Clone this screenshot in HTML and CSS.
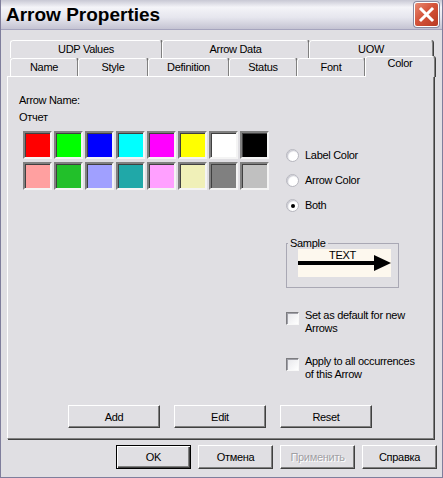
FILE: index.html
```html
<!DOCTYPE html>
<html lang="ru">
<head>
    <meta charset="UTF-8">
    <title>Arrow Properties</title>
    <link rel="stylesheet" href="styles.css">
</head>
<body>
    <div class="window">
        <div class="titlebar">
            <span class="title">Arrow Properties</span>
            <div class="close">
                <svg width="23" height="23" viewBox="0 0 23 23">
                    <path d="M6 6 L17 17 M17 6 L6 17" stroke="#fff" stroke-width="3" stroke-linecap="square"/>
                </svg>
            </div>
        </div>

        <div class="body">
            <div class="tabs">
                <div class="tab-row">
                    <div class="tab w152">UDP Values</div>
                    <div class="tab w147">Arrow Data</div>
                    <div class="tab w124">UOW</div>
                </div>
                <div class="tab-row">
                    <div class="tab w68">Name</div>
                    <div class="tab w70">Style</div>
                    <div class="tab w81">Definition</div>
                    <div class="tab w68">Status</div>
                    <div class="tab w68">Font</div>
                    <div class="tab w70 active">Color</div>
                </div>
            </div>

            <div class="panel">
                <div class="panel-main">
                    <div class="left">
                        <div class="label">Arrow Name:</div>
                        <div class="label name">Отчет</div>
                        <div class="swatches">
                            <div class="swatch" style="background:#ff0000"></div>
                            <div class="swatch" style="background:#00ff00"></div>
                            <div class="swatch" style="background:#0000ff"></div>
                            <div class="swatch" style="background:#00ffff"></div>
                            <div class="swatch" style="background:#ff00ff"></div>
                            <div class="swatch" style="background:#ffff00"></div>
                            <div class="swatch" style="background:#ffffff"></div>
                            <div class="swatch" style="background:#000000"></div>
                            <div class="swatch" style="background:#ffa0a0"></div>
                            <div class="swatch" style="background:#22c02a"></div>
                            <div class="swatch" style="background:#a0a0ff"></div>
                            <div class="swatch" style="background:#20a8a8"></div>
                            <div class="swatch" style="background:#ffa0ff"></div>
                            <div class="swatch" style="background:#f0f0b8"></div>
                            <div class="swatch" style="background:#808080"></div>
                            <div class="swatch" style="background:#c0c0c0"></div>
                        </div>
                    </div>

                    <div class="right">
                        <div class="radios">
                            <div class="option"><span class="radio"></span>Label Color</div>
                            <div class="option"><span class="radio"></span>Arrow Color</div>
                            <div class="option"><span class="radio checked"></span>Both</div>
                        </div>

                        <fieldset class="sample">
                            <legend>Sample</legend>
                            <div class="sample-box">
                                <span class="sample-text">TEXT</span>
                                <svg class="arrow" width="93" height="28" viewBox="0 0 93 28">
                                    <rect x="0" y="12" width="78" height="4" fill="#000"/>
                                    <polygon points="76,6 93,14 76,22" fill="#000"/>
                                </svg>
                            </div>
                        </fieldset>

                        <div class="check-row first">
                            <span class="checkbox"></span>
                            <span>Set as default for new<br>Arrows</span>
                        </div>
                        <div class="check-row">
                            <span class="checkbox"></span>
                            <span>Apply to all occurrences<br>of this Arrow</span>
                        </div>
                    </div>
                </div>

                <div class="panel-buttons">
                    <button class="btn">Add</button>
                    <button class="btn">Edit</button>
                    <button class="btn">Reset</button>
                </div>
            </div>

            <div class="dialog-buttons">
                <button class="btn small default">OK</button>
                <button class="btn small">Отмена</button>
                <button class="btn small" disabled>Применить</button>
                <button class="btn small">Справка</button>
            </div>
        </div>
    </div>
</body>
</html>
```

FILE: styles.css
```css
body {
    margin: 0;
    font-family: "Liberation Sans", Arial, sans-serif;
    font-size: 11px;
    letter-spacing: -0.3px;
    color: #000;
    background-color: #e0dfe3;
}
.window {
    width: 443px;
    height: 478px;
    box-sizing: border-box;
    border: 1px solid #7f7e9c;
    border-top: none;
    background-color: #e0dfe3;
}
.titlebar {
    height: 29px;
    border-bottom: 1px solid #a5a4bd;
    background: linear-gradient(#c8c8d4 0%, #f4f4f8 25%, #e6e6ee 60%, #c4c3d2 100%);
    display: flex;
    align-items: center;
    justify-content: space-between;
    padding: 0 3px 0 5px;
}
.title {
    font-size: 19px;
    font-weight: bold;
    letter-spacing: 0;
    padding-top: 1px;
}
.close {
    width: 23px;
    height: 23px;
    border: 1px solid #fff;
    border-radius: 3px;
    background: linear-gradient(135deg, #e88a72 0%, #d4533a 45%, #b93a22 100%);
    box-shadow: 0 0 0 1px #8a8aa0;
}
.close svg {
    display: block;
}
.body {
    padding: 10px 7px 0 7px;
}
.tabs {
    margin-left: 2px;
}
.tab-row {
    display: flex;
    height: 18px;
}
.tab {
    box-sizing: border-box;
    height: 18px;
    border: 1px solid #fff;
    border-right: 1px solid #808080;
    border-bottom: none;
    border-radius: 3px 3px 0 0;
    box-shadow: 1px 0 0 #404040;
    background-color: #e0dfe3;
    text-align: center;
    line-height: 17px;
}
.tab.active {
    height: 21px;
    margin-top: -2px;
    position: relative;
    z-index: 1;
    line-height: 13px;
}
.w152 { width: 152px; }
.w147 { width: 147px; }
.w124 { width: 124px; }
.w81 { width: 81px; }
.w70 { width: 70px; }
.w68 { width: 68px; }

.panel {
    width: 427px;
    height: 363px;
    margin-left: -1px;
    margin-right: 6px;
    box-sizing: border-box;
    border: 1px solid #fff;
    border-right-color: #808080;
    border-bottom-color: #808080;
    box-shadow: 1px 1px 0 #404040;
    padding: 16px 0 10px 11px;
    display: flex;
    flex-direction: column;
}
.panel-main {
    display: flex;
}
.left {
    width: 267px;
}
.label {
    line-height: 14px;
}
.label.name {
    margin-top: 3px;
}
.swatches {
    margin: 7px 0 0 4px;
    display: grid;
    grid-template-columns: repeat(8, 29px);
    grid-auto-rows: 28px;
    gap: 3px 2px;
}
.swatch {
    box-sizing: border-box;
    border: 2px solid;
    border-color: #808080 #f4f4f4 #f4f4f4 #808080;
    box-shadow: inset 1px 1px 0 #404040;
}
.right {
    flex: 1;
    padding-top: 56px;
}
.radios {
    display: flex;
    flex-direction: column;
    gap: 12px;
}
.option {
    display: flex;
    align-items: center;
    height: 13px;
    line-height: 13px;
}
.radio {
    width: 11px;
    height: 11px;
    margin-right: 6px;
    border-radius: 50%;
    border: 1px solid #b8b8c0;
    background: radial-gradient(circle at 60% 60%, #fff 45%, #e4e4ea 100%);
    box-shadow: inset 1px 1px 1px #c8c8d0;
    position: relative;
    flex: none;
}
.radio.checked::after {
    content: "";
    position: absolute;
    left: 4px;
    top: 4px;
    width: 4px;
    height: 4px;
    border-radius: 50%;
    background-color: #000;
}
.sample {
    width: 113px;
    box-sizing: border-box;
    margin: 25px 0 0 0;
    padding: 0 0 10px 11px;
    border: 1px solid #a9a8b4;
    min-inline-size: 0;
}
.sample legend {
    margin-left: -10px;
    padding: 0 2px;
    line-height: 12px;
}
.sample-box {
    position: relative;
    width: 93px;
    height: 28px;
    background-color: #fdf8ee;
    text-align: center;
}
.sample-text {
    display: block;
    line-height: 11px;
    padding-top: 1px;
    margin-left: -4px;
}
.arrow {
    position: absolute;
    left: 0;
    top: 0;
}
.check-row {
    display: flex;
    align-items: flex-start;
    line-height: 13px;
    margin-top: 20px;
}
.check-row.first {
    margin-top: 21px;
}
.checkbox {
    width: 13px;
    height: 13px;
    box-sizing: border-box;
    margin: 3px 6px 0 0;
    border: 1px solid;
    border-color: #7c7c80 #f8f8f8 #f8f8f8 #7c7c80;
    box-shadow: inset 1px 1px 0 #a0a0a8;
    background: linear-gradient(135deg, #e6e6ea, #fff);
    flex: none;
}
.panel-buttons {
    margin-top: auto;
    margin-left: 49px;
    display: flex;
    gap: 14px;
}
button {
    font-family: "Liberation Sans", Arial, sans-serif;
    font-size: 11px;
    letter-spacing: -0.3px;
    color: #000;
}
.btn {
    width: 92px;
    height: 23px;
    padding: 0;
    box-sizing: border-box;
    background-color: #e0dfe3;
    border: 1px solid;
    border-color: #fff #404040 #404040 #fff;
    box-shadow: inset -1px -1px 0 #808080;
}
.btn:disabled {
    color: #a0a0a4;
    text-shadow: 1px 1px 0 #fff;
}
.dialog-buttons {
    display: flex;
    justify-content: flex-end;
    gap: 7px;
    margin-top: 6px;
    margin-right: -2px;
}
.btn.small {
    width: 75px;
    height: 24px;
}
.btn.default {
    border: 1px solid #000;
    box-shadow: inset 1px 1px 0 #fff, inset -1px -1px 0 #404040, inset -2px -2px 0 #808080;
}
```
